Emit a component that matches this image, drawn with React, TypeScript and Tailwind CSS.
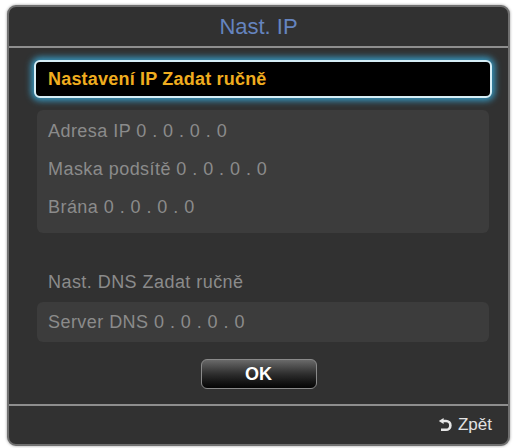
const font = "font-['Liberation_Sans',Arial,Helvetica,sans-serif]";

function Row({ children }: { children: React.ReactNode }) {
  return (
    <div className="flex h-[38px] items-center pl-[11px] text-[18px] tracking-[0.45px] text-[#8b8b8b]">
      {children}
    </div>
  );
}

function ReturnIcon() {
  return (
    <svg width="15" height="14" viewBox="0 0 15 14" className="mr-[5px]">
      <path
        d="M4.5 3 H8 A4.4 4.4 0 0 1 8 11.8 H3"
        fill="none"
        stroke="#e6e6e6"
        strokeWidth="2.6"
      />
      <path d="M0.8 3 L5.6 0 L5.6 6 Z" fill="#e6e6e6" />
    </svg>
  );
}

export default function App() {
  return (
    <div className={`h-[448px] w-[515px] bg-white pl-[7px] pt-[5px] ${font}`}>
      <div className="flex h-[441px] w-[503px] flex-col overflow-hidden rounded-[9px] border-2 border-[#707070] bg-[#313131] shadow-[0_0_3px_rgba(0,0,0,0.4)]">
        <div className="flex h-[41px] items-center justify-center border-b-2 border-[#8e8e8e] text-[22px] text-[#6584bf]">
          Nast. IP
        </div>

        <div className="flex flex-col pl-[25px] pr-[16px] pt-[12px]">
          <div className="flex h-[38px] items-center rounded-[6px] border-2 border-[#d6eef6] bg-black pl-[12px] text-[18px] font-bold tracking-[0.2px] text-[#efad1f] shadow-[0_0_6px_3px_rgba(55,165,210,0.85)]">
            Nastavení IP Zadat ručně
          </div>

          <div className="mx-[3px] mt-[12px] rounded-[6px] bg-[#3c3c3c] pb-[7px] pt-[2px]">
            <Row>Adresa IP 0 . 0 . 0 . 0</Row>
            <Row>Maska podsítě 0 . 0 . 0 . 0</Row>
            <Row>Brána 0 . 0 . 0 . 0</Row>
          </div>

          <div className="mx-[3px] mt-[30px]">
            <Row>Nast. DNS Zadat ručně</Row>
          </div>

          <div className="mx-[3px] mt-[1px] flex h-[40px] items-center rounded-[6px] bg-[#3c3c3c] pl-[11px] text-[18px] tracking-[0.45px] text-[#8b8b8b]">
            Server DNS 0 . 0 . 0 . 0
          </div>
        </div>

        <div className="mt-[17px] flex justify-center">
          <div className="flex h-[30px] w-[116px] items-center justify-center rounded-[6px] border border-[#8a8a8a] bg-gradient-to-b from-[#6a6a6a] via-[#2e2e2e] to-[#050505] text-[18px] font-bold text-white">
            OK
          </div>
        </div>

        <div className="mt-[15px] flex flex-1 items-center justify-end border-t-2 border-[#8e8e8e] pr-[16px] text-[17px] text-[#e2e2e2]">
          <ReturnIcon />
          Zpět
        </div>
      </div>
    </div>
  );
}
